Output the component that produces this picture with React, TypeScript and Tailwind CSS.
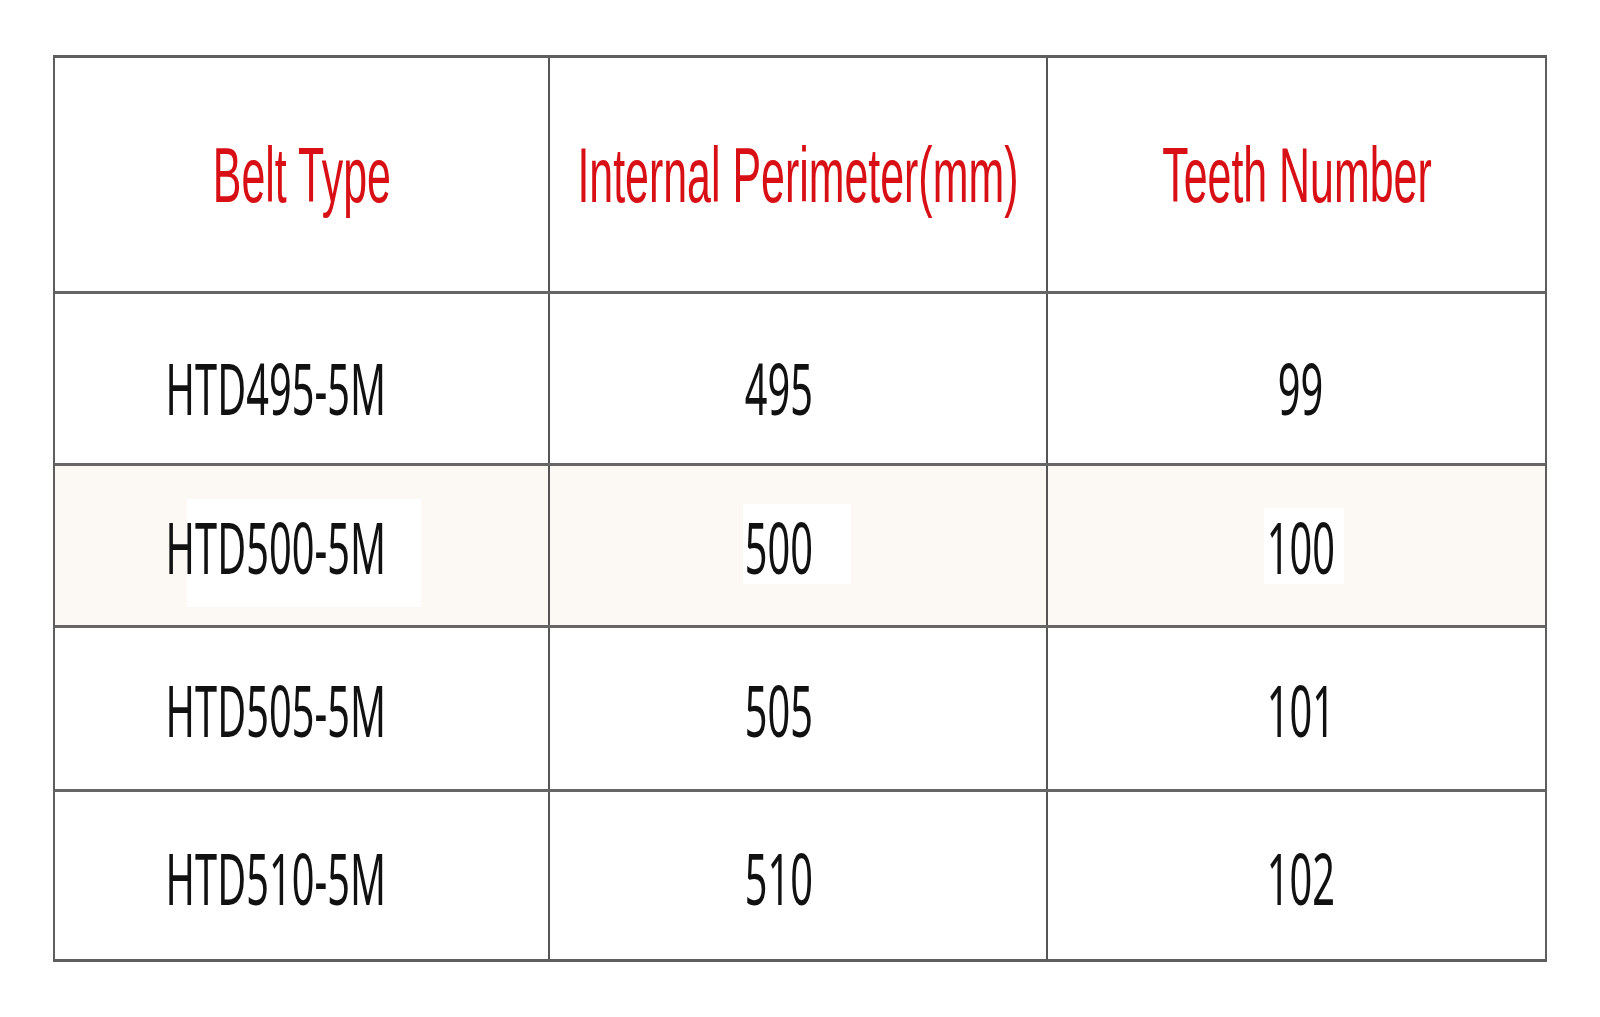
const HEADERS = ["Belt Type", "Internal Perimeter(mm)", "Teeth Number"];

const ROWS = [
  { type: "HTD495-5M", perim: "495", teeth: "99", h: "h-[172px]", pt: "pt-[18px]" },
  { type: "HTD500-5M", perim: "500", teeth: "100", h: "h-[162px]", pt: "pt-[2px]", shaded: true },
  { type: "HTD505-5M", perim: "505", teeth: "101", h: "h-[164px]", pt: "pt-[2px]" },
  { type: "HTD510-5M", perim: "510", teeth: "102", h: "h-[167px]", pt: "pt-[4px]" },
];

// white highlight patches behind the shaded row's text (copied from a doc, left as-is)
const PATCHES = [
  "left-[132px] top-[33px] w-[234px] h-[108px]",
  "left-[193px] top-[38px] w-[108px] h-[80px]",
  "left-[216px] top-[42px] w-[80px] h-[76px]",
];

function Cell({ children, className = "" }: { children: React.ReactNode; className?: string }) {
  return <div className={`relative flex items-center justify-center overflow-visible ${className}`}>{children}</div>;
}

function Head({ text }: { text: string }) {
  return (
    <span className="inline-block whitespace-nowrap text-[78px] leading-none text-[#d80f14] scale-x-[0.55] font-['Liberation_Sans',Arial,sans-serif]">
      {text}
    </span>
  );
}

function Val({ text }: { text: string }) {
  return (
    <span className="relative inline-block whitespace-nowrap text-[71px] leading-none text-[#111] scale-x-[0.56] font-['Noto_Sans',sans-serif]">
      {text}
    </span>
  );
}

export default function App() {
  return (
    <div className="w-[1600px] h-[1017px] bg-white pt-[55px] pl-[53px]">
      <div className="w-[1494px] border-2 border-t-[3px] border-b-[3px] border-[#5e5e5e] bg-white">
        <div className="grid grid-cols-[495px_498px_497px] h-[236px] border-b-[3px] border-[#666]">
          {HEADERS.map((h, i) => (
            <Cell key={h} className={i < 2 ? "border-r-2 border-[#555]" : ""}>
              <Head text={h} />
            </Cell>
          ))}
        </div>
        {ROWS.map((r, i) => {
          const vals = [r.type, r.perim, r.teeth];
          const pads = ["pr-[52px]", "pr-[38px]", "pl-[8px]"];
          return (
            <div
              key={r.type}
              className={`grid grid-cols-[495px_498px_497px] ${r.h} ${i < ROWS.length - 1 ? "border-b-[3px] border-[#666]" : ""} ${
                r.shaded ? "bg-[#fcf8f3]" : ""
              }`}
            >
              {vals.map((v, j) => (
                <Cell key={j} className={`${j < 2 ? "border-r-2 border-[#555]" : ""} ${pads[j]} ${r.pt}`}>
                  {r.shaded && <div className={`absolute bg-white ${PATCHES[j]}`} />}
                  <Val text={v} />
                </Cell>
              ))}
            </div>
          );
        })}
      </div>
    </div>
  );
}
